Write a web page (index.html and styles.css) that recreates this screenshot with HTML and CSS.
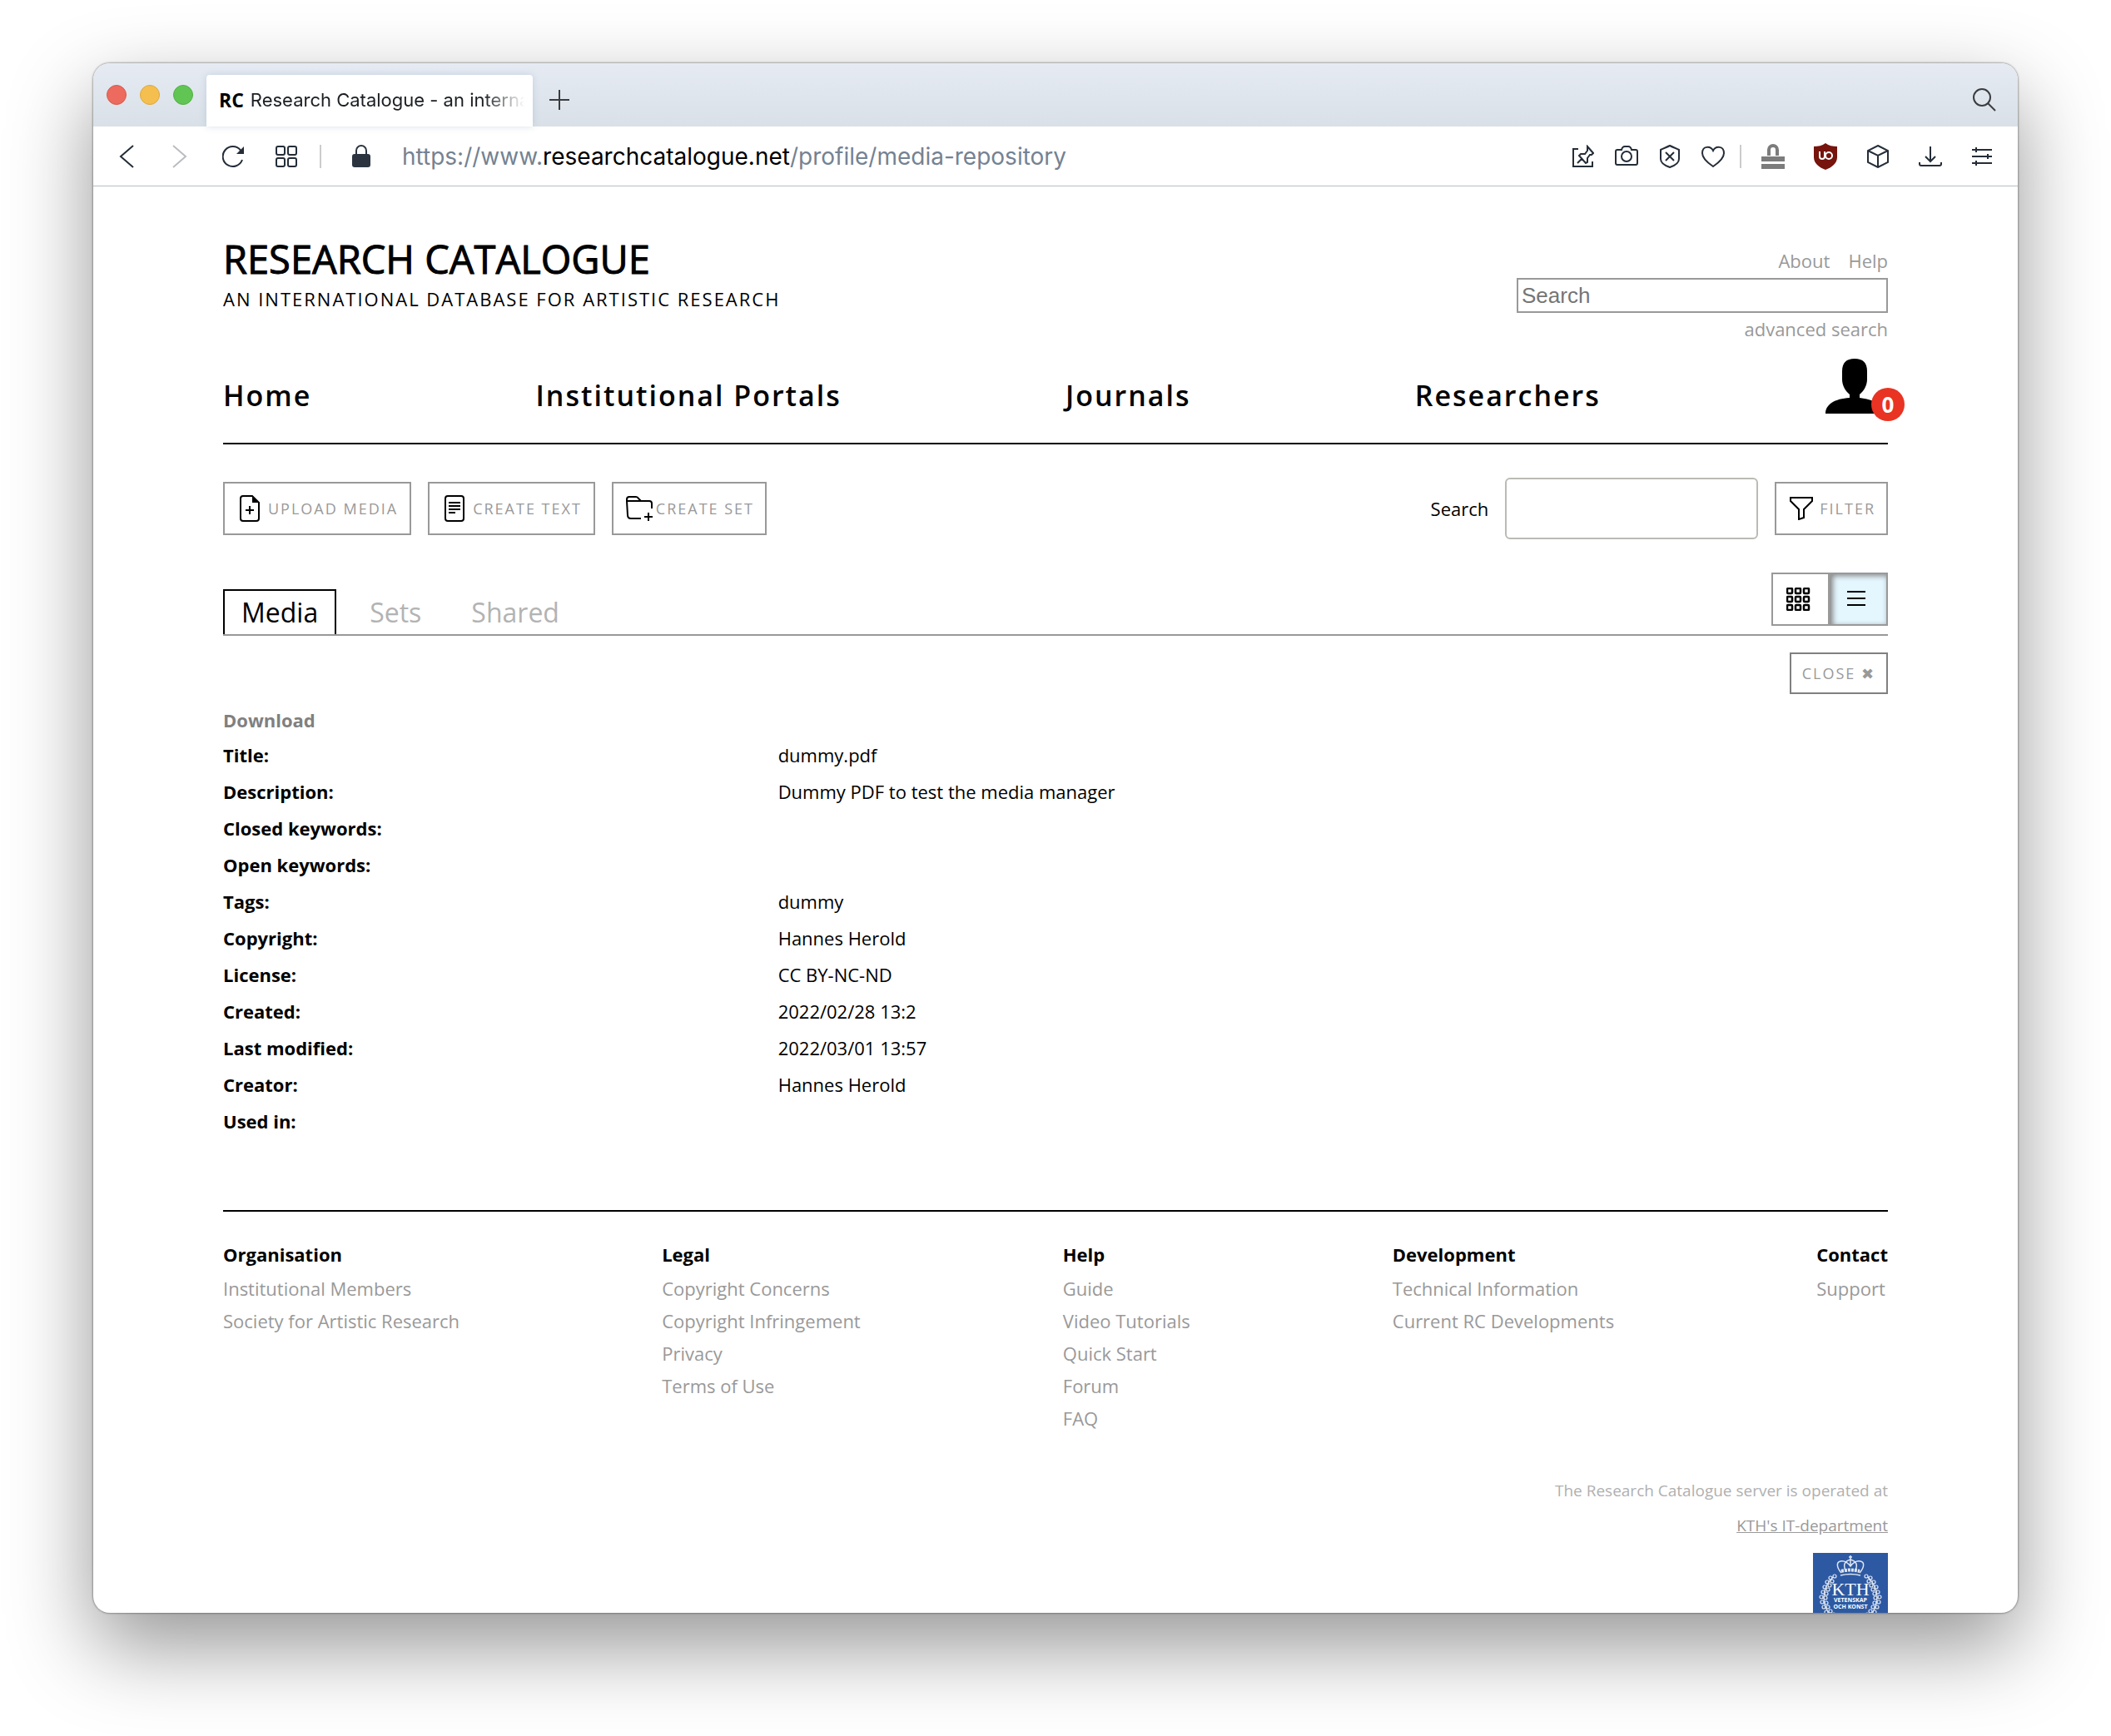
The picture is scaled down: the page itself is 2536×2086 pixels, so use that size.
FILE: index.html
```
<!DOCTYPE html>
<html lang="en">
<head>
<meta charset="utf-8">
<title>Research Catalogue - an international database for artistic research</title>
<link rel="stylesheet" href="styles.css">
</head>
<body>
<div class="window">
  <div class="tabstrip">
    <div class="lights"><span class="light red"></span><span class="light amber"></span><span class="light green"></span></div>
    <div class="browser-tab"><b class="favicon">RC</b><span class="tab-title">Research Catalogue - an international</span></div>
    <button class="icon-btn new-tab" aria-label="New tab"><svg width="24" height="24" viewBox="0 0 24 24"><path d="M12 0v24M0 12h24"/></svg></button>
    <button class="icon-btn tab-search" aria-label="Search tabs"><svg width="28" height="28" viewBox="0 0 28 28"><circle cx="11" cy="11" r="10"/><path d="M18 18l9 9"/></svg></button>
  </div>
  <div class="addressbar">
    <div class="nav-icons">
      <button class="icon-btn" aria-label="Back"><svg width="26" height="28" viewBox="0 0 26 28"><path d="M21 1L6 14l15 13"/></svg></button>
      <button class="icon-btn faded" aria-label="Forward"><svg width="26" height="28" viewBox="0 0 26 28"><path d="M5 1l15 13L5 27"/></svg></button>
      <button class="icon-btn" aria-label="Reload"><svg width="26" height="28" viewBox="0 0 26 28"><path d="M24 18A12 12 0 1 1 22 6.500"/><path class="solid" d="M26 2v9h-9z"/></svg></button>
      <button class="icon-btn" aria-label="Speed dial"><svg width="26" height="26" viewBox="0 0 26 26"><rect x="1" y="1" width="10" height="10" rx="2"/><rect x="15" y="1" width="10" height="10" rx="2"/><rect x="1" y="15" width="10" height="10" rx="2"/><rect x="15" y="15" width="10" height="10" rx="2"/></svg></button>
    </div>
    <span class="divider"></span>
    <svg class="lock" width="22" height="28" viewBox="0 0 22 28"><rect class="solid" x="0" y="11" width="22" height="16" rx="3"/><path d="M5 12V7a6 6 0 0 1 12 0v5"/></svg>
    <div class="url">https://www.<span class="host">researchcatalogue.net</span>/profile/media-repository</div>
    <div class="page-icons">
      <button class="icon-btn" aria-label="Pin"><svg width="26" height="28" viewBox="0 0 26 28"><path d="M7 5H1v21h23v-6"/><path d="M18 2l7 8-2 2-2 0-3 4 0 5-2 1-8-9 2-2 5 0 3-4 0-3zM11 17l-5 5"/></svg></button>
      <button class="icon-btn" aria-label="Capture"><svg width="28" height="26" viewBox="0 0 28 26"><path d="M3 5h5q1-4 4-4h4q3 0 4 4h5q2 0 2 2v14q0 2-2 2H3q-2 0-2-2V7q0-2 2-2z"/><circle cx="14" cy="13" r="6"/></svg></button>
      <button class="icon-btn" aria-label="Blocker"><svg width="26" height="28" viewBox="0 0 26 28"><path d="M13 1c4 2 7 3 11 5v11c0 5-5 8-11 10C7 25 2 22 2 17V6c4-2 7-3 11-5zM8 9l10 10M18 9L8 19"/></svg></button>
      <button class="icon-btn" aria-label="Bookmark"><svg width="28" height="28" viewBox="0 0 28 28"><path d="M14 7C11 1 1 1 1 10c0 6 7 12 13 16 6-4 13-10 13-16 0-9-10-9-13-3z"/></svg></button>
    </div>
    <span class="divider"></span>
    <div class="ext-icons">
      <button class="icon-btn stamp" aria-label="Archive"><svg width="28" height="32" viewBox="0 0 28 32"><path d="M9 15V8a5 5 0 0 1 10 0v7" stroke-width="4"/><path d="M0 19h28M0 28h28" stroke-width="6"/></svg></button>
      <button class="icon-btn" aria-label="uBlock"><svg width="28" height="32" viewBox="0 0 28 32"><path d="M14 0c4 3 9 4 14 4v13c0 7-6 12-14 15C6 29 0 24 0 17V4c5 0 10-1 14-4z" fill="#76140d" stroke="none"/><path d="M7 10v6q0 3 3 3t3-3v-6M13 10v6" stroke="#fff" stroke-width="2"/><circle cx="18" cy="15" r="4" stroke="#fff" stroke-width="2"/></svg></button>
      <button class="icon-btn" aria-label="Extensions"><svg width="28" height="28" viewBox="0 0 28 28"><path d="M14 1l12 6v14l-12 6-12-6V7zM2 7l12 6 12-6M14 13v14"/></svg></button>
      <button class="icon-btn" aria-label="Downloads"><svg width="28" height="26" viewBox="0 0 28 26"><path d="M14 1v18M8 13l6 6 6-6M1 20v2q0 2 2 2h22q2 0 2-2v-2"/></svg></button>
      <button class="icon-btn" aria-label="Settings"><svg width="26" height="24" viewBox="0 0 26 24"><path d="M1 4h24M1 12h24M1 20h24M6 1v6M20 9v6M6 17v6"/></svg></button>
    </div>
  </div>

  <div class="page">
    <header class="masthead">
      <a class="brand" href="#"><span class="brand-name">RESEARCH CATALOGUE</span><span class="brand-sub">AN INTERNATIONAL DATABASE FOR ARTISTIC RESEARCH</span></a>
      <form class="site-search">
        <div class="top-links"><a href="#">About</a><a href="#">Help</a></div>
        <input type="search" placeholder="Search" aria-label="Search the catalogue">
        <a class="advanced" href="#">advanced search</a>
      </form>
    </header>

    <nav class="main-nav">
      <a href="#">Home</a>
      <a href="#">Institutional Portals</a>
      <a href="#">Journals</a>
      <a href="#">Researchers</a>
      <a class="account" href="#" aria-label="Account"><svg width="76" height="66" viewBox="0 0 76 66"><path d="M36 0c10 0 15 5 15 15v10c0 7-4 14-9 18v4c16 2 29 8 29 19H1c0-11 11-18 29-19v-4c-5-4-9-11-9-18V15C21 5 26 0 36 0z"/></svg><span class="badge">0</span></a>
    </nav>

    <div class="toolbar">
      <button class="btn"><svg width="24" height="32" viewBox="0 0 24 32"><path d="M15 1H4Q1 1 1 4v24q0 3 3 3h16q3 0 3-3V9zM12 13v10M7 18h10"/><path class="solid" d="M15 1v8h8z"/></svg>UPLOAD MEDIA</button>
      <button class="btn"><svg width="24" height="32" viewBox="0 0 24 32"><rect x="1" y="1" width="22" height="30" rx="3"/><path d="M5 9h14M5 13h14M5 17h14M5 21h8"/></svg>CREATE TEXT</button>
      <button class="btn btn-set"><svg width="32" height="30" viewBox="0 0 32 30"><path d="M31 15V9q0-3-3-3H1l1 17q0 4 4 4h12M1 6V4q0-3 3-3h8q2 0 3 2l3 3M27 20v10M22 25h10"/></svg>CREATE SET</button>
      <label class="find-label" for="find">Search</label>
      <input class="find" id="find" type="text">
      <button class="btn btn-filter"><svg width="28" height="28" viewBox="0 0 28 28"><path d="M1 1h26v4l-10 10v10l-6 2V15L1 5z"/></svg>FILTER</button>
    </div>

    <div class="tabs-row">
      <nav class="tabs"><a class="tab active" href="#">Media</a><a class="tab" href="#">Sets</a><a class="tab" href="#">Shared</a></nav>
      <div class="views">
        <button class="view" aria-label="Grid view"><svg width="30" height="28" viewBox="0 0 30 28"><g stroke-width="2.500"><rect x="1" y="1" width="6" height="6" rx="1"/><rect x="11" y="1" width="6" height="6" rx="1"/><rect x="21" y="1" width="6" height="6" rx="1"/><rect x="1" y="11" width="6" height="6" rx="1"/><rect x="11" y="11" width="6" height="6" rx="1"/><rect x="21" y="11" width="6" height="6" rx="1"/><rect x="1" y="21" width="6" height="6" rx="1"/><rect x="11" y="21" width="6" height="6" rx="1"/><rect x="21" y="21" width="6" height="6" rx="1"/></g></svg></button>
        <button class="view selected" aria-label="List view"><svg width="30" height="28" viewBox="0 0 30 28"><path d="M3 5h22M3 13h22M3 21h22"/></svg></button>
      </div>
    </div>

    <div class="close-row"><button class="btn-close">CLOSE ✖</button></div>

    <a class="download" href="#">Download</a>
    <table class="details">
      <tr><th>Title:</th><td>dummy.pdf</td></tr>
      <tr><th>Description:</th><td>Dummy PDF to test the media manager</td></tr>
      <tr><th>Closed keywords:</th><td></td></tr>
      <tr><th>Open keywords:</th><td></td></tr>
      <tr><th>Tags:</th><td>dummy</td></tr>
      <tr><th>Copyright:</th><td>Hannes Herold</td></tr>
      <tr><th>License:</th><td>CC BY-NC-ND</td></tr>
      <tr><th>Created:</th><td>2022/02/28 13:2</td></tr>
      <tr><th>Last modified:</th><td>2022/03/01 13:57</td></tr>
      <tr><th>Creator:</th><td>Hannes Herold</td></tr>
      <tr><th>Used in:</th><td></td></tr>
    </table>

    <footer class="footer">
      <div class="footer-cols">
        <div class="col"><h2>Organisation</h2><a href="#">Institutional Members</a><a href="#">Society for Artistic Research</a></div>
        <div class="col"><h2>Legal</h2><a href="#">Copyright Concerns</a><a href="#">Copyright Infringement</a><a href="#">Privacy</a><a href="#">Terms of Use</a></div>
        <div class="col"><h2>Help</h2><a href="#">Guide</a><a href="#">Video Tutorials</a><a href="#">Quick Start</a><a href="#">Forum</a><a href="#">FAQ</a></div>
        <div class="col"><h2>Development</h2><a href="#">Technical Information</a><a href="#">Current RC Developments</a></div>
        <div class="col"><h2>Contact</h2><a href="#">Support</a></div>
      </div>
      <div class="operator">
        <span>The Research Catalogue server is operated at</span>
        <a href="#">KTH's IT-department</a>
        <svg class="kth" width="90" height="90" viewBox="0 0 90 90"><rect width="90" height="90" fill="#2d59a3" stroke="none"/>
          <g fill="none" stroke="#dfe6f1">
            <path d="M34 24c-6-7-6-13-1-14 5-1 9 2 12 6 3-4 7-7 12-6 5 1 5 7-1 14M45 3v13M43 5h4M39 21c-3-7-1-11 6-13 7 2 9 6 6 13M33 27q12-3 24 0" stroke-width="1.500"/>
            <path d="M34 22q11-3 22 0" stroke-width="4" stroke-dasharray="3 1"/>
            <g id="wreath" stroke-width="1.200"><circle cx="26" cy="28" r="2"/><circle cx="21" cy="30" r="2"/><circle cx="23" cy="34" r="2"/><circle cx="17" cy="35" r="2"/><circle cx="20" cy="39" r="2"/><circle cx="14" cy="41" r="2"/><circle cx="18" cy="44" r="2"/><circle cx="12" cy="47" r="2"/><circle cx="16" cy="49" r="2"/><circle cx="10" cy="53" r="2"/><circle cx="15" cy="54" r="2"/><circle cx="11" cy="59" r="2"/><circle cx="16" cy="60" r="2"/><circle cx="13" cy="65" r="2"/><circle cx="18" cy="65" r="2"/><circle cx="16" cy="71" r="2"/><circle cx="21" cy="70" r="2"/><circle cx="20" cy="76" r="2"/><circle cx="25" cy="74" r="2"/><path d="M24 29C11 42 9 60 21 75"/></g>
            <use href="#wreath" transform="matrix(-1 0 0 1 90 0)"/>
          </g>
          <text class="kth-name" x="45" y="51">KTH</text><text class="kth-motto" x="45" y="59">VETENSKAP</text><text class="kth-motto" x="45" y="67">OCH KONST</text></svg>
      </div>
    </footer>
  </div>
</div>
</body>
</html>
```
FILE: styles.css
```
* { box-sizing: border-box; }
body {
  margin: 0;
  padding: 76px 112px 148px;
  height: 100vh;
  overflow: hidden;
  background: #fff;
  color: #000;
  font: 22px/30px "Open Sans", sans-serif;
}
a { color: #999; text-decoration: none; }
button { font: inherit; cursor: pointer; }
svg { display: block; flex: none; fill: none; stroke: currentColor; stroke-width: 2; }
svg .solid { fill: currentColor; stroke: none; }

.window {
  height: 100%;
  overflow: hidden;
  background: #fff;
  border-radius: 20px;
  box-shadow: 0 0 2px 1px rgba(0, 0, 0, .3), 0 40px 100px rgba(0, 0, 0, .42);
}

/* Browser chrome */
.tabstrip {
  display: flex;
  align-items: center;
  height: 76px;
  padding: 0 26px 0 16px;
  background: linear-gradient(#e6ebf3, #d9e0e7);
}
.lights { display: flex; flex: none; gap: 16px; width: 120px; }
.light { flex: none; width: 24px; height: 24px; border-radius: 50%; border: 1px solid; }
.red { background: #ec6a5e; border-color: #d85a4e; }
.amber { background: #f5bf4f; border-color: #dca840; }
.green { background: #61c554; border-color: #52b045; }
.browser-tab {
  align-self: flex-end;
  display: flex;
  align-items: center;
  gap: 8px;
  width: 392px;
  height: 62px;
  padding: 0 10px 2px 15px;
  background: #fff;
  border-radius: 4px 4px 0 0;
  box-shadow: 0 0 8px rgba(120, 150, 180, .3);
  font: 22px/30px Inter, sans-serif;
  color: #1b1e22;
}
.favicon { font: bold 23px/30px "Open Sans", sans-serif; color: #000; }
.tab-title {
  flex: 1;
  overflow: hidden;
  white-space: nowrap;
  -webkit-mask-image: linear-gradient(to right, #000 85%, transparent);
  mask-image: linear-gradient(to right, #000 85%, transparent);
}
.icon-btn { padding: 0; border: 0; background: none; color: #242d38; }
.new-tab { margin: 12px auto 0 20px; color: #3a3d40; }
.tab-search { margin-top: 12px; color: #3a3d40; }
.addressbar {
  display: flex;
  align-items: center;
  height: 72px;
  padding: 0 30px 0 27px;
  border-bottom: 1px solid #b6bfc7;
}
.nav-icons { display: flex; align-items: center; gap: 38px; }
.faded { color: #b9bdc2; }
.divider { width: 2px; height: 28px; margin: 0 18px 0 27px; background: #ccc; }
.lock { margin: 0 38px 0 19px; color: #2c353f; }
.url { flex: 1; font: 28px/36px Inter, sans-serif; color: #748292; white-space: nowrap; }
.host { color: #000; }
.page-icons { display: flex; align-items: center; gap: 25px; }
.page-icons + .divider { margin: 0 24px 0 18px; }
.ext-icons { display: flex; align-items: center; gap: 35px; }
.stamp { color: #7c7c7c; }

/* Page */
.page { padding: 64px 156px 0; }
.masthead { display: flex; justify-content: space-between; height: 126px; }
.brand { display: flex; flex-direction: column; color: #000; }
.brand-name { font-size: 47px; line-height: 46px; -webkit-text-stroke: 1px #000; }
.brand-sub { margin-top: 10px; line-height: 30px; letter-spacing: 2px; }
.site-search { display: flex; flex-direction: column; align-items: flex-end; gap: 5px; width: 446px; padding-top: 11px; }
.top-links { display: flex; gap: 22px; margin-bottom: 2px; line-height: 28px; }
.advanced { line-height: 28px; }
.site-search input {
  width: 100%;
  height: 42px;
  padding: 0 4px;
  border: 2px solid #999;
  border-radius: 0;
  font: 26px "Liberation Sans", sans-serif;
}
.site-search input::placeholder { color: #757575; }

.main-nav {
  display: flex;
  justify-content: space-between;
  align-items: center;
  height: 120px;
  border-bottom: 2px solid #000;
}
.main-nav a { padding-top: 4px; font-size: 34px; font-weight: 600; line-height: 44px; letter-spacing: 2px; color: #000; }
.main-nav .account { position: relative; align-self: flex-start; padding-top: 17px; letter-spacing: 0; }
.account svg { fill: currentColor; stroke: none; }
.badge {
  position: absolute;
  right: -20px;
  top: 52px;
  width: 40px;
  height: 40px;
  border-radius: 50%;
  background: #e93323;
  color: #fff;
  font-size: 26px;
  font-weight: 700;
  line-height: 40px;
  text-align: center;
}

.toolbar { display: flex; align-items: center; gap: 20px; margin-top: 40px; }
.btn {
  display: flex;
  align-items: center;
  gap: 10px;
  height: 64px;
  padding: 0 14px 0 18px;
  border: 2px solid #999;
  background: #fff;
  color: #999;
  font-size: 18px;
  letter-spacing: 2px;
}
.btn svg { color: #000; }
.btn-set { gap: 4px; padding: 0 13px 0 15px; }
.btn-filter { gap: 8px; padding: 0 13px 0 16px; }
.find-label { margin-left: auto; }
.find { width: 304px; height: 74px; padding: 0 12px; border: 2px solid #bbbbb5; border-radius: 6px; font: inherit; }

.tabs-row {
  display: flex;
  justify-content: space-between;
  align-items: flex-end;
  margin-top: 40px;
  height: 76px;
  border-bottom: 2px solid #999;
}
.tabs { display: flex; gap: 16px; }
.tab { padding: 6px 22px 4px; font-size: 32px; line-height: 44px; color: #b3b3b3; }
.tab.active { margin-right: 2px; padding: 4px 20px; border: 2px solid #000; border-bottom: 0; color: #000; }
.views { display: flex; align-self: flex-start; }
.view { display: flex; align-items: center; width: 70px; height: 64px; padding: 0 0 0 16px; border: 2px solid #999; background: #fff; color: #000; }
.view.selected { background: #e4f6fe; box-shadow: inset 2px 2px 6px #888; }
.close-row { display: flex; justify-content: flex-end; margin-top: 20px; }
.btn-close { height: 50px; padding: 0 13px; border: 2px solid #808080; background: #fff; color: #999; font-size: 18px; letter-spacing: 2px; }

.download { display: block; margin-top: 16px; font-weight: 700; color: #808080; }
.details { width: 100%; margin-top: 5px; border-collapse: collapse; table-layout: fixed; }
.details th, .details td { height: 44px; padding: 0; text-align: left; }
.details th { width: 33.333%; }

.footer { margin-top: 85px; padding-top: 34px; border-top: 2px solid #000; }
.footer-cols { display: flex; justify-content: space-between; padding-bottom: 46px; }
.col { display: flex; flex-direction: column; }
.col h2 { margin: 0 0 4px; font-size: 22px; line-height: 35px; }
.col a { line-height: 39px; }
.operator { display: flex; flex-direction: column; align-items: flex-end; font-size: 19px; line-height: 42px; color: #b0b0b0; }
.operator a { text-decoration: underline; }
.kth { margin-top: 12px; }
.kth text { fill: #fff; stroke: none; text-anchor: middle; }
.kth .kth-name { font: 22px "Liberation Serif", serif; }
.kth .kth-motto { font: bold 7px "Open Sans", sans-serif; }
```
